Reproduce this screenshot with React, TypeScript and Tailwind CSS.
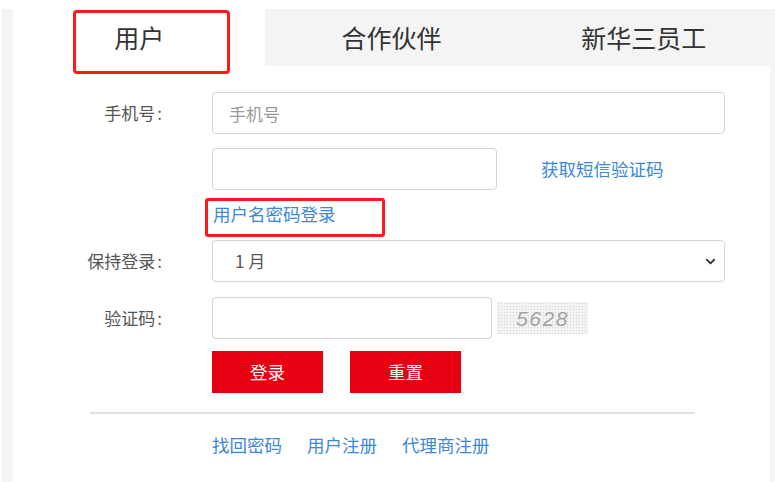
import { ChevronDown } from "lucide-react";

const tabs = ["用户", "合作伙伴", "新华三员工"];

function Row({
  label,
  className,
  children,
}: {
  label?: string;
  className?: string;
  children: React.ReactNode;
}) {
  return (
    <div className={"flex items-center " + (className ?? "")}>
      <div className="w-[150px] shrink-0 pr-[1px] text-right text-[17px] leading-[24px] text-[#555]">
        {label ? (
          <>
            {label}
            <span className="ml-[2px]">:</span>
          </>
        ) : null}
      </div>
      <div className="ml-[49px] flex-1">{children}</div>
    </div>
  );
}

export default function App() {
  return (
    <div className="h-[482px] w-[775px] overflow-hidden bg-white pl-[2px] pt-[9px] font-['Noto_Sans_CJK_SC',sans-serif]">
      <div className="h-[473px] bg-[#f4f4f4] pl-[11px] pr-[5px]">
        <div className="h-full bg-white">
          {/* tabs */}
          <div className="flex h-[57px]">
            {tabs.map((t, i) => (
              <div
                key={t}
                className={
                  i === 0
                    ? "relative flex flex-1 items-center justify-center bg-white text-[25px] text-[#333]"
                    : "flex flex-1 items-center justify-center bg-[#f4f4f4] text-[25px] text-[#333]"
                }
              >
                {t}
                {i === 0 ? (
                  <div className="absolute left-[60px] top-[1px] h-[64px] w-[157px] rounded-[4px] border-[3px] border-[#ff1a1a]" />
                ) : null}
              </div>
            ))}
          </div>

          {/* form */}
          <div className="pr-[45px]">
            <Row label="手机号" className="mt-[26px]">
              <input
                className="h-[42px] w-full rounded-[4px] border border-[#d4d4d4] px-[16px] text-[17px] text-[#555] outline-none placeholder:text-[#999]"
                placeholder="手机号"
              />
            </Row>

            <Row className="mt-[14px]">
              <div className="flex items-center">
                <input className="h-[42px] w-[285px] rounded-[4px] border border-[#d4d4d4] px-[16px] text-[17px] outline-none" />
                <a className="ml-[44px] text-[17.5px] leading-[24px] text-[#3b87d9]">
                  获取短信验证码
                </a>
              </div>
            </Row>

            <Row>
              <div className="relative h-[50px] pt-[12px]">
                <a className="block pl-[1px] text-[17.5px] leading-[24px] text-[#3b87d9]">
                  用户名密码登录
                </a>
                <div className="absolute left-[-7px] top-[8px] h-[39px] w-[180px] rounded-[3px] border-[3px] border-[#ff1a1a]" />
              </div>
            </Row>

            <Row label="保持登录">
              <div className="relative h-[42px] rounded-[4px] border border-[#d4d4d4]">
                <select className="h-full w-full appearance-none bg-transparent px-[22px] text-[17px] text-[#555] outline-none">
                  <option>{"1\u00a0月"}</option>
                </select>
                <ChevronDown
                  className="pointer-events-none absolute right-[6px] top-[13px] text-[#333]"
                  size={15}
                  strokeWidth={3}
                />
              </div>
            </Row>

            <Row label="验证码" className="mt-[15px]">
              <div className="flex items-center">
                <input className="h-[42px] w-[280px] rounded-[4px] border border-[#d4d4d4] px-[16px] text-[17px] outline-none" />
                <div className="ml-[5px] flex h-[32px] w-[91px] items-center justify-center bg-[#f3f3f3] bg-[radial-gradient(#d2d2d2_0.7px,transparent_0.9px)] bg-[length:3px_3px] font-['Liberation_Sans',sans-serif] text-[21px] italic leading-none tracking-[1.5px] text-[#a3a3a3]">
                  5628
                </div>
              </div>
            </Row>

            <Row className="mt-[12px]">
              <div className="flex gap-[27px]">
                <button className="h-[42px] w-[111px] bg-[#e60012] text-[17.5px] text-white">
                  登录
                </button>
                <button className="h-[42px] w-[111px] bg-[#e60012] text-[17.5px] text-white">
                  重置
                </button>
              </div>
            </Row>
          </div>

          <div className="ml-[77px] mt-[19px] h-[2px] w-[605px] bg-[#e0e0e0]" />

          <div className="ml-[199px] mt-[19px] flex gap-[25px] text-[17.5px] leading-[24px] text-[#3b87d9]">
            <a>找回密码</a>
            <a>用户注册</a>
            <a>代理商注册</a>
          </div>
        </div>
      </div>
    </div>
  );
}
